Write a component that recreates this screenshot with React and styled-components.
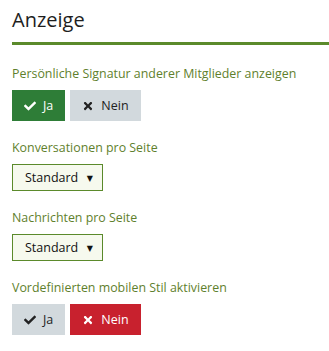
import React from 'react';
import styled, { createGlobalStyle } from 'styled-components';
import { FaCheck, FaTimes } from 'react-icons/fa';

const Global = createGlobalStyle`
  body {
    margin: 0;
    background: #fff;
    font-family: 'Open Sans', 'DejaVu Sans', sans-serif;
  }
`;

const Page = styled.div`
  padding: 8px 0 0 12px;
  width: 329px;
  box-sizing: border-box;
`;

const Title = styled.h2`
  margin: 0;
  font-size: 20px;
  font-weight: 400;
  color: #1e1e1e;
  line-height: 24px;
  padding-bottom: 10px;
  border-bottom: 3px solid #5b8a2b;
`;

const Fields = styled.div`
  display: flex;
  flex-direction: column;
  gap: 19px;
  padding-top: 21px;
`;

const Field = styled.div`
  display: flex;
  flex-direction: column;
  gap: 8px;
`;

const Label = styled.div`
  font-size: 12.4px;
  color: #5f7f2d;
  line-height: 16px;
`;

const colors = {
  yes: { bg: '#2e7d37', fg: '#fff' },
  no: { bg: '#c8212e', fg: '#fff' },
  off: { bg: '#d2d9dd', fg: '#222' },
};

const Toggle = styled.div`
  display: flex;
  gap: 5px;
`;

const Btn = styled.button`
  display: flex;
  align-items: center;
  gap: 7px;
  height: 31px;
  padding: 0 12px;
  border: 0;
  border-radius: 0;
  font-family: inherit;
  font-size: 12.5px;
  background: ${p => colors[p.$kind].bg};
  color: ${p => colors[p.$kind].fg};
  svg { font-size: 12px; }
`;

const Select = styled.div`
  display: flex;
  align-items: center;
  justify-content: space-between;
  width: 91px;
  height: 27px;
  box-sizing: border-box;
  padding: 0 9px 0 12px;
  border: 1px solid #5b8a2b;
  background: #f6f9ee;
  font-size: 12.5px;
  color: #111;
`;

const Caret = styled.span`
  font-size: 8px;
`;

const YesNo = ({ on }) => (
  <Toggle>
    <Btn $kind={on ? 'yes' : 'off'}><FaCheck />Ja</Btn>
    <Btn $kind={on ? 'off' : 'no'}><FaTimes />Nein</Btn>
  </Toggle>
);

export default function App() {
  return (
    <Page>
      <Global />
      <Title>Anzeige</Title>
      <Fields>
        <Field>
          <Label>Persönliche Signatur anderer Mitglieder anzeigen</Label>
          <YesNo on />
        </Field>
        <Field>
          <Label>Konversationen pro Seite</Label>
          <Select>Standard<Caret>▼</Caret></Select>
        </Field>
        <Field>
          <Label>Nachrichten pro Seite</Label>
          <Select>Standard<Caret>▼</Caret></Select>
        </Field>
        <Field>
          <Label>Vordefinierten mobilen Stil aktivieren</Label>
          <YesNo on={false} />
        </Field>
      </Fields>
    </Page>
  );
}
